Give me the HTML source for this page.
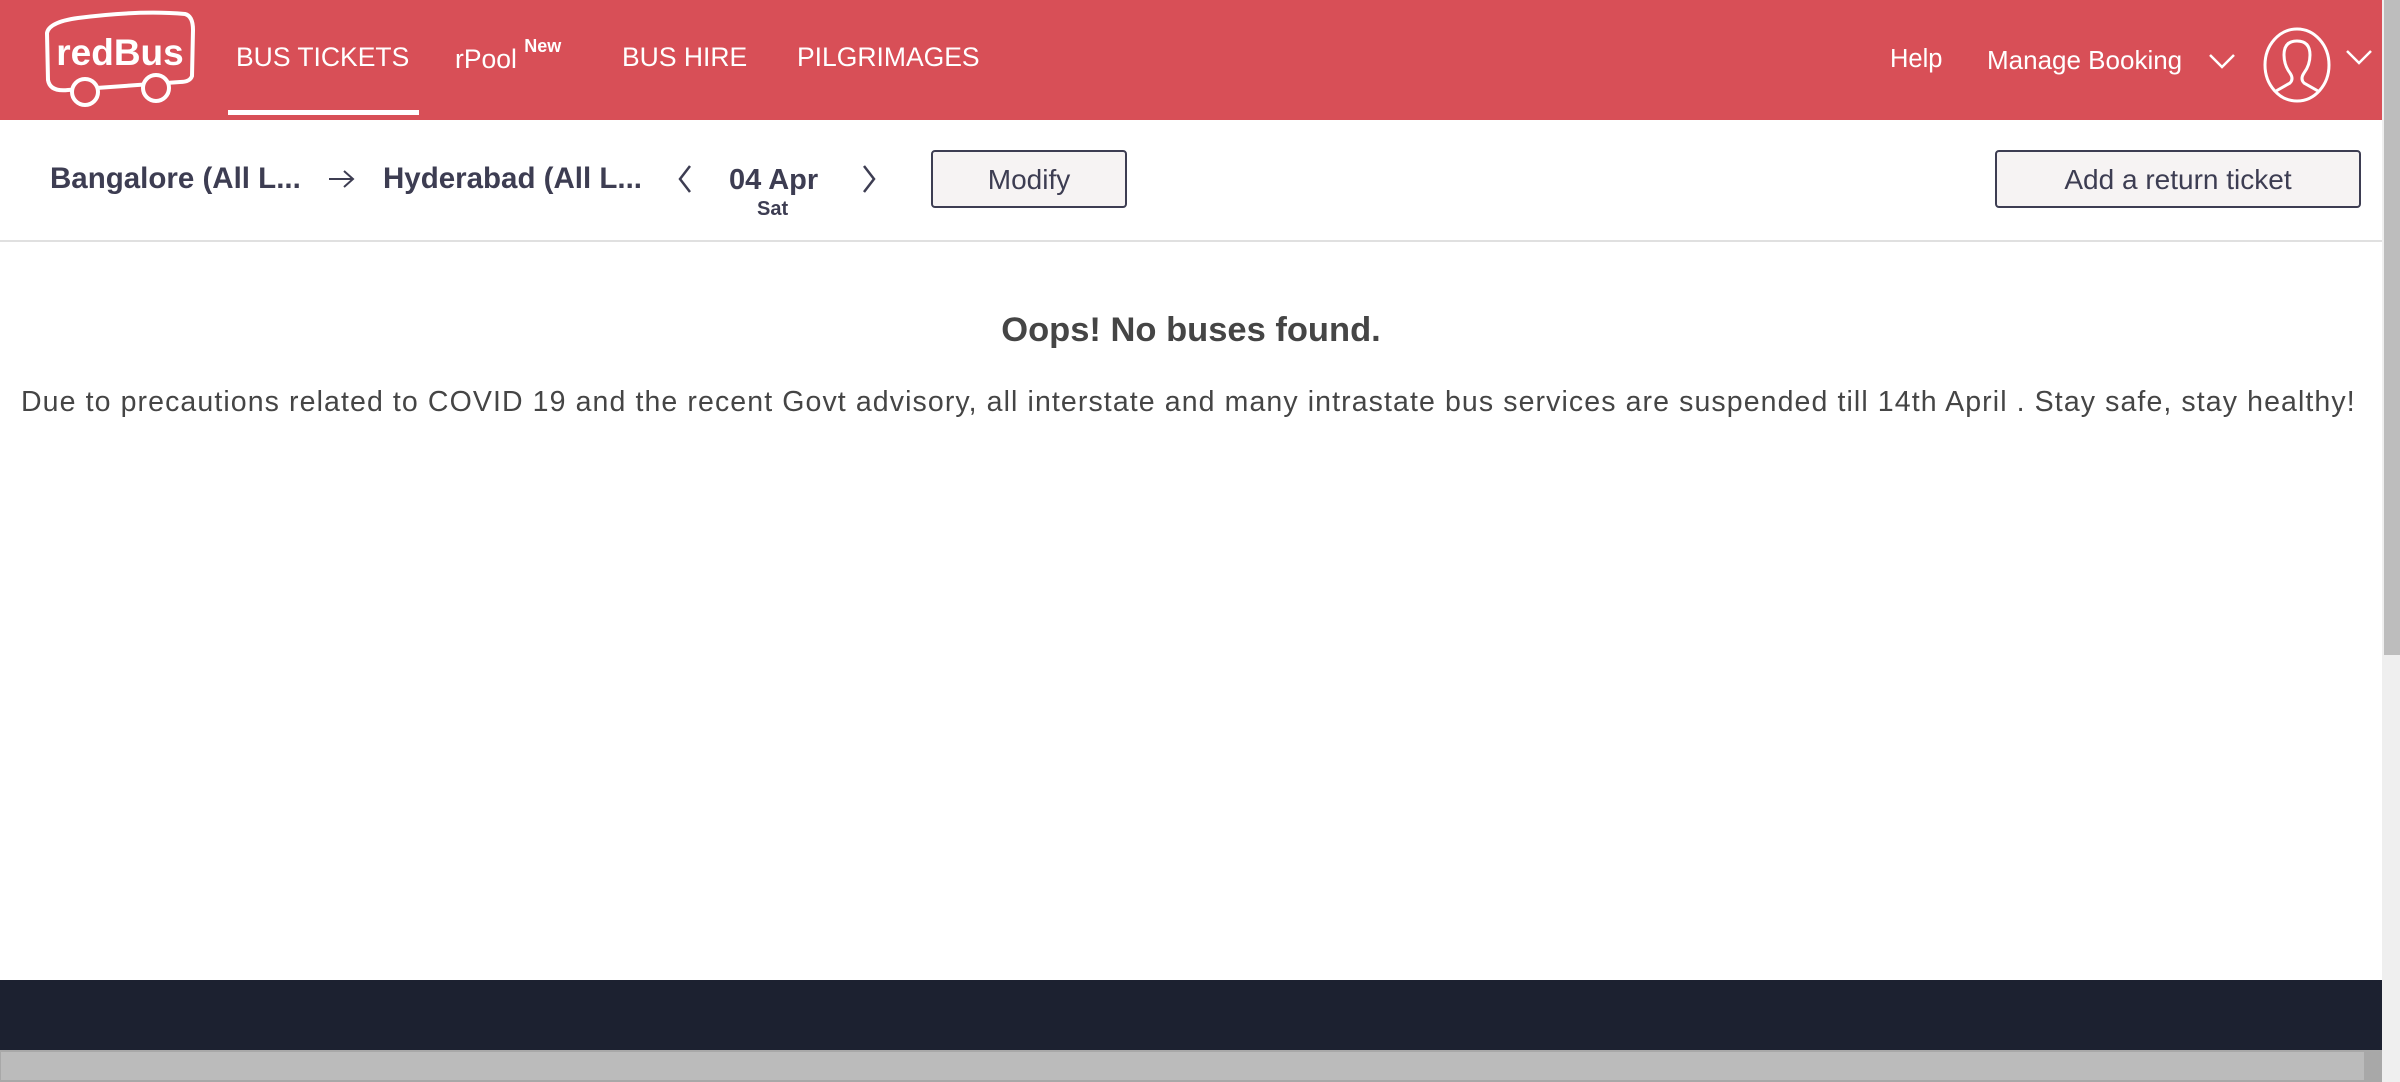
<!DOCTYPE html>
<html><head><meta charset="utf-8"><style>
*{margin:0;padding:0;box-sizing:border-box}
html,body{width:2400px;height:1082px;overflow:hidden;background:#fff;font-family:"Liberation Sans",sans-serif}
.hdr{position:absolute;left:0;top:0;width:2382px;height:120px;background:#d84f57}
.nav{position:absolute;top:42px;color:#fff;font-size:26.5px;white-space:nowrap}
.ul{position:absolute;left:228px;top:110px;width:191px;height:5px;background:#fff}
.sb{position:absolute;left:2382px;top:0;width:18px;height:1082px;background:#efefef}
.thumb{position:absolute;left:2384px;top:0;width:16px;height:655px;background:#bdbdbd}
.row{position:absolute;color:#3d3d52;white-space:nowrap}
.btn{position:absolute;top:150px;height:58px;border:2px solid #3d3d52;border-radius:4px;background:#f6f3f3;color:#3d3d52;font-size:28px;display:flex;align-items:center;justify-content:center;padding-top:2px}
.line{position:absolute;left:0;top:240px;width:2382px;height:2px;background:#e0e0e0}
.foot{position:absolute;left:0;top:980px;width:2382px;height:70px;background:#1c2130}
.hbar{position:absolute;left:0;top:1050px;width:2382px;height:32px;background:#a8a8a8}
.hthumb{position:absolute;left:1px;top:1052px;width:2363px;height:28px;background:#bbb}
</style></head><body>
<div class="hdr">
<svg style="position:absolute;left:40px;top:10px" width="160" height="100" viewBox="40 10 160 100">
<path d="M47 33 Q49 22 78 18 Q140 10 185 14 Q193 16 193 30 L192 76 Q190 82 180 82 L68 90 Q50 92 48 80 Z" fill="none" stroke="#fff" stroke-width="4"/>
<circle cx="85" cy="92" r="13" fill="#d84f57" stroke="#fff" stroke-width="4"/>
<circle cx="156" cy="88" r="13" fill="#d84f57" stroke="#fff" stroke-width="4"/>
<text x="120" y="65" text-anchor="middle" fill="#fff" font-family="Liberation Sans" font-weight="bold" font-size="37">redBus</text>
</svg>
<div class="nav" style="left:236px">BUS TICKETS</div>
<div class="nav" style="left:455px">rPool <sup style="font-size:18px;font-weight:bold;position:relative;top:-6px">New</sup></div>
<div class="nav" style="left:622px">BUS HIRE</div>
<div class="nav" style="left:797px">PILGRIMAGES</div>
<div class="ul"></div>
<div class="nav" style="left:1890px;top:45px;font-size:25.5px">Help</div>
<div class="nav" style="left:1987px;top:45px;font-size:26px">Manage Booking</div>
<svg style="position:absolute;left:2208px;top:52px" width="28" height="18"><path d="M2 3 L14 15 L26 3" fill="none" stroke="#fff" stroke-width="2.5"/></svg>
<svg style="position:absolute;left:2262px;top:27px" width="70" height="76" viewBox="0 0 70 76">
<ellipse cx="35" cy="38" rx="32" ry="36" fill="none" stroke="#fff" stroke-width="3"/>
<path d="M14 64 L28 56 Q32 52 28 46 Q22 38 22 28 Q22 14 35 14 Q48 14 48 28 Q48 38 42 46 Q38 52 42 56 L56 64" fill="none" stroke="#fff" stroke-width="3"/>
</svg>
<svg style="position:absolute;left:2345px;top:48px" width="28" height="18"><path d="M2 3 L14 15 L26 3" fill="none" stroke="#fff" stroke-width="2.5"/></svg>
</div>
<div class="row" style="left:50px;top:162px;font-size:29.5px;font-weight:bold">Bangalore (All L...</div>
<svg style="position:absolute;left:327px;top:168px" width="30" height="22"><path d="M2 11 H26 M17 3 L26 11 L17 19" fill="none" stroke="#3d3d52" stroke-width="2"/></svg>
<div class="row" style="left:383px;top:162px;font-size:29.5px;font-weight:bold">Hyderabad (All L...</div>
<svg style="position:absolute;left:676px;top:164px" width="18" height="30"><path d="M14 2 L4 15 L14 28" fill="none" stroke="#3d3d52" stroke-width="2.5"/></svg>
<div class="row" style="left:729px;top:164px;font-size:29px;font-weight:bold">04 Apr</div>
<div class="row" style="left:757px;top:198px;font-size:20px;font-weight:bold">Sat</div>
<svg style="position:absolute;left:860px;top:164px" width="18" height="30"><path d="M4 2 L14 15 L4 28" fill="none" stroke="#3d3d52" stroke-width="2.5"/></svg>
<div class="btn" style="left:931px;width:196px">Modify</div>
<div class="btn" style="left:1995px;width:366px">Add a return ticket</div>
<div class="line"></div>
<div class="row" style="left:0;width:2382px;text-align:center;top:311px;font-size:34.5px;font-weight:bold;color:#454545">Oops! No buses found.</div>
<div class="row" style="left:21px;top:386px;font-size:28.5px;color:#454545;letter-spacing:1.1px">Due to precautions related to COVID 19 and the recent Govt advisory, all interstate and many intrastate bus services are suspended till 14th April . Stay safe, stay healthy!</div>
<div class="foot"></div>
<div class="hbar"></div><div class="hthumb"></div>
<div class="sb"></div><div class="thumb"></div>
</body></html>
